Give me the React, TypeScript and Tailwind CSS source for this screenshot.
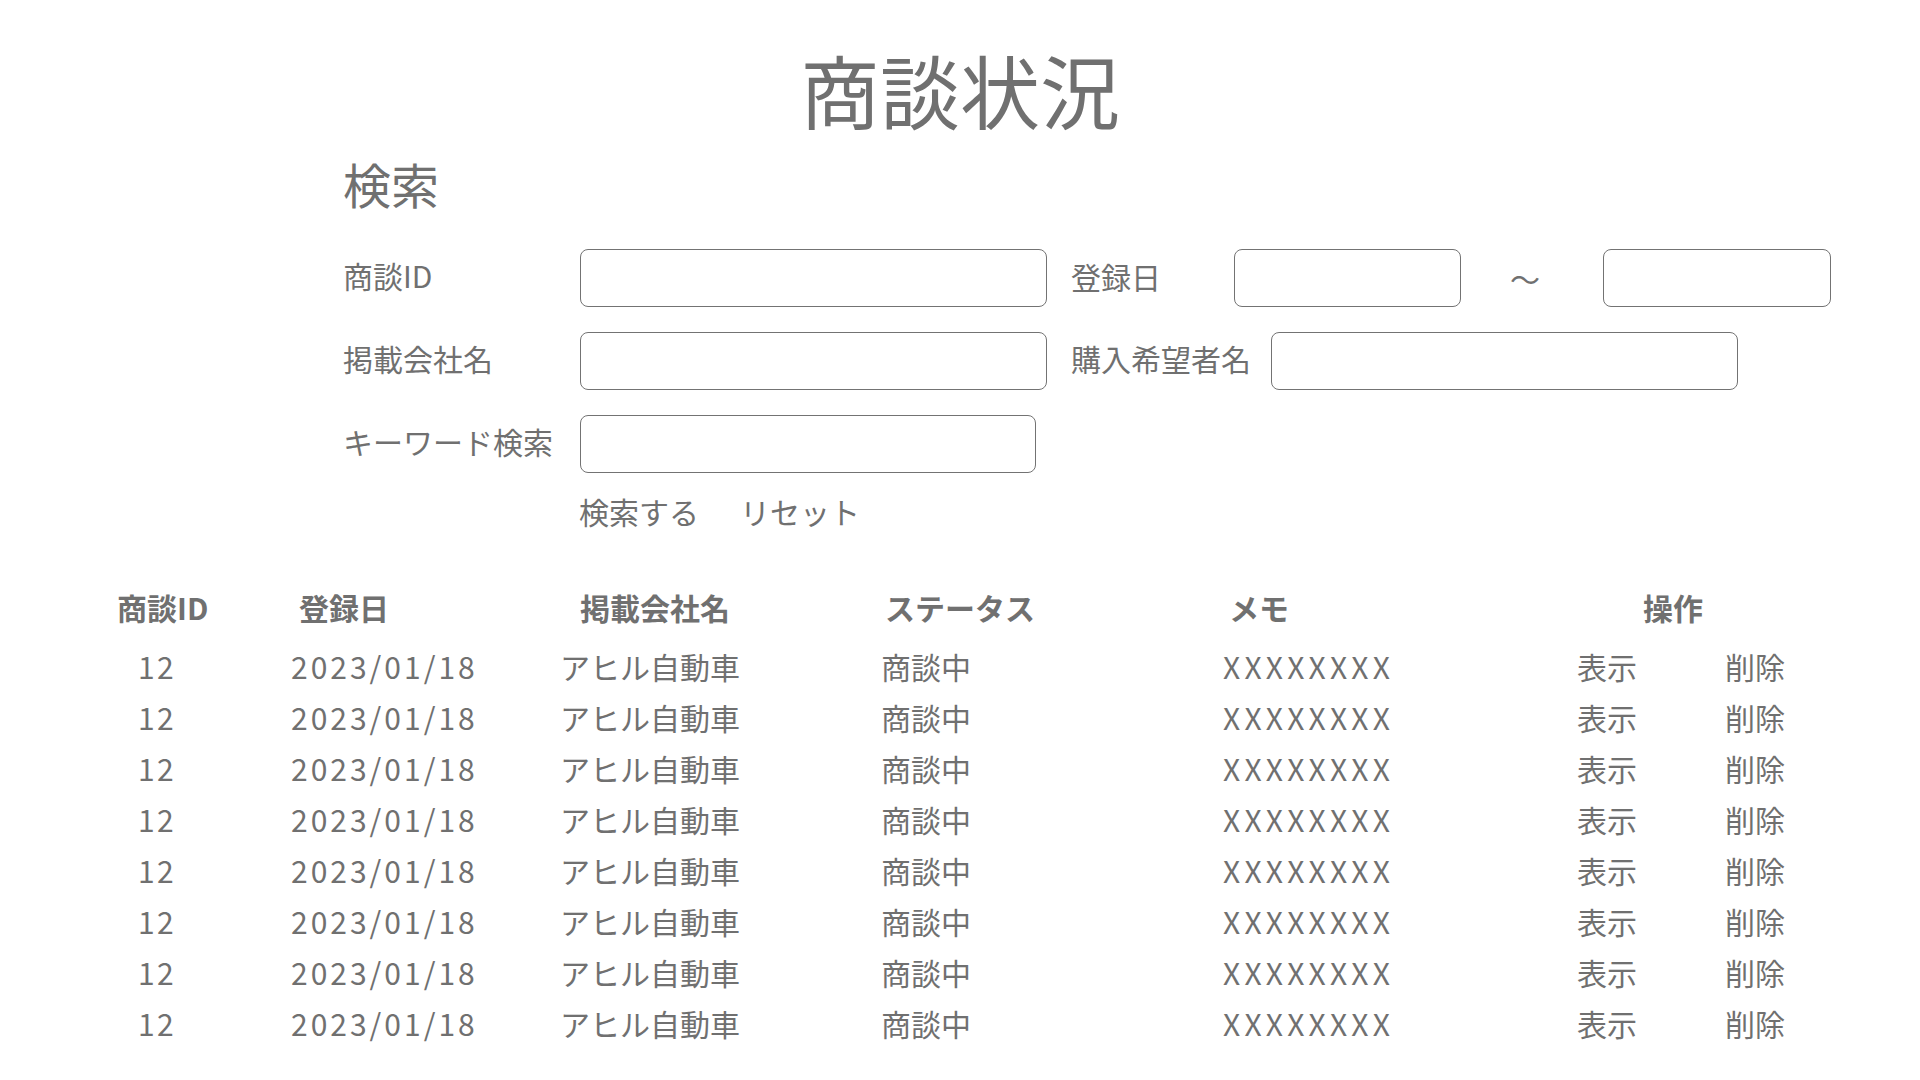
import React from 'react'

const FONT = "font-['Noto_Sans_CJK_JP','Noto_Sans',sans-serif]"

// table columns: header cells and body cells start at slightly different x
const HEAD_COLS = ['w-[182px]', 'w-[281px]', 'w-[305px]', 'w-[344px]', 'w-[414px]', 'w-[120px]']
const BODY_COLS = ['w-[153px]', 'w-[269px]', 'w-[321px]', 'w-[342px]', 'w-[354px]', 'w-[148px]', 'w-[120px]']

const headers = ['商談ID', '登録日', '掲載会社名', 'ステータス', 'メモ', '操作']

const rows = Array.from({ length: 8 }, () => ({
  id: '12',
  date: '2023/01/18',
  company: 'アヒル自動車',
  status: '商談中',
  memo: 'XXXXXXXX',
}))

function Field({ className }: { className: string }) {
  return (
    <input
      type="text"
      className={`h-full rounded-[8px] border border-[#737373] bg-white outline-none ${className}`}
    />
  )
}

export default function App() {
  return (
    <div className={`min-h-screen bg-white text-[#707070] ${FONT}`}>
      {/* Title */}
      <h1 className="pt-[48px] text-center text-[80px] leading-[80px] font-normal">商談状況</h1>

      {/* Search form */}
      <section className="pl-[343px]">
        <h2 className="mt-[31px] text-[48px] leading-[48px] font-normal">検索</h2>

        <div className="mt-[42px] flex flex-col gap-[25px] text-[30px]">
          <div className="flex h-[58px] items-center">
            <label className="w-[237px] pb-[6px]">商談ID</label>
            <Field className="w-[467px]" />
            <label className="ml-[24px] w-[163px] pb-[4px]">登録日</label>
            <Field className="w-[227px]" />
            <span className="w-[142px] pr-[14px] text-center">〜</span>
            <Field className="w-[228px]" />
          </div>

          <div className="flex h-[58px] items-center">
            <label className="w-[237px] pb-[6px]">掲載会社名</label>
            <Field className="w-[467px]" />
            <label className="ml-[24px] w-[200px] pb-[6px]">購入希望者名</label>
            <Field className="w-[467px]" />
          </div>

          <div className="flex h-[58px] items-center">
            <label className="w-[237px] whitespace-nowrap pb-[6px]">キーワード検索</label>
            <Field className="w-[456px]" />
          </div>
        </div>

        <div className="mt-[18px] flex gap-[41px] pl-[236px] text-[30px] leading-[40px]">
          <button type="button">検索する</button>
          <button type="button">リセット</button>
        </div>
      </section>

      {/* Results */}
      <div className="mt-[51px] text-[30px]">
        <div className="flex h-[51px] items-center pl-[117px] font-bold">
          {headers.map((h, i) => (
            <div key={h} className={HEAD_COLS[i]}>{h}</div>
          ))}
        </div>

        <div className="mt-[8px]">
          {rows.map((r, idx) => (
            <div key={idx} className="flex h-[51px] items-center pl-[138px]">
              <div className={`${BODY_COLS[0]} tracking-[0.08em]`}>{r.id}</div>
              <div className={`${BODY_COLS[1]} tracking-[0.1em]`}>{r.date}</div>
              <div className={BODY_COLS[2]}>{r.company}</div>
              <div className={BODY_COLS[3]}>{r.status}</div>
              <div className={`${BODY_COLS[4]} tracking-[0.14em]`}>{r.memo}</div>
              <div className={BODY_COLS[5]}>表示</div>
              <div className={BODY_COLS[6]}>削除</div>
            </div>
          ))}
        </div>
      </div>
    </div>
  )
}
